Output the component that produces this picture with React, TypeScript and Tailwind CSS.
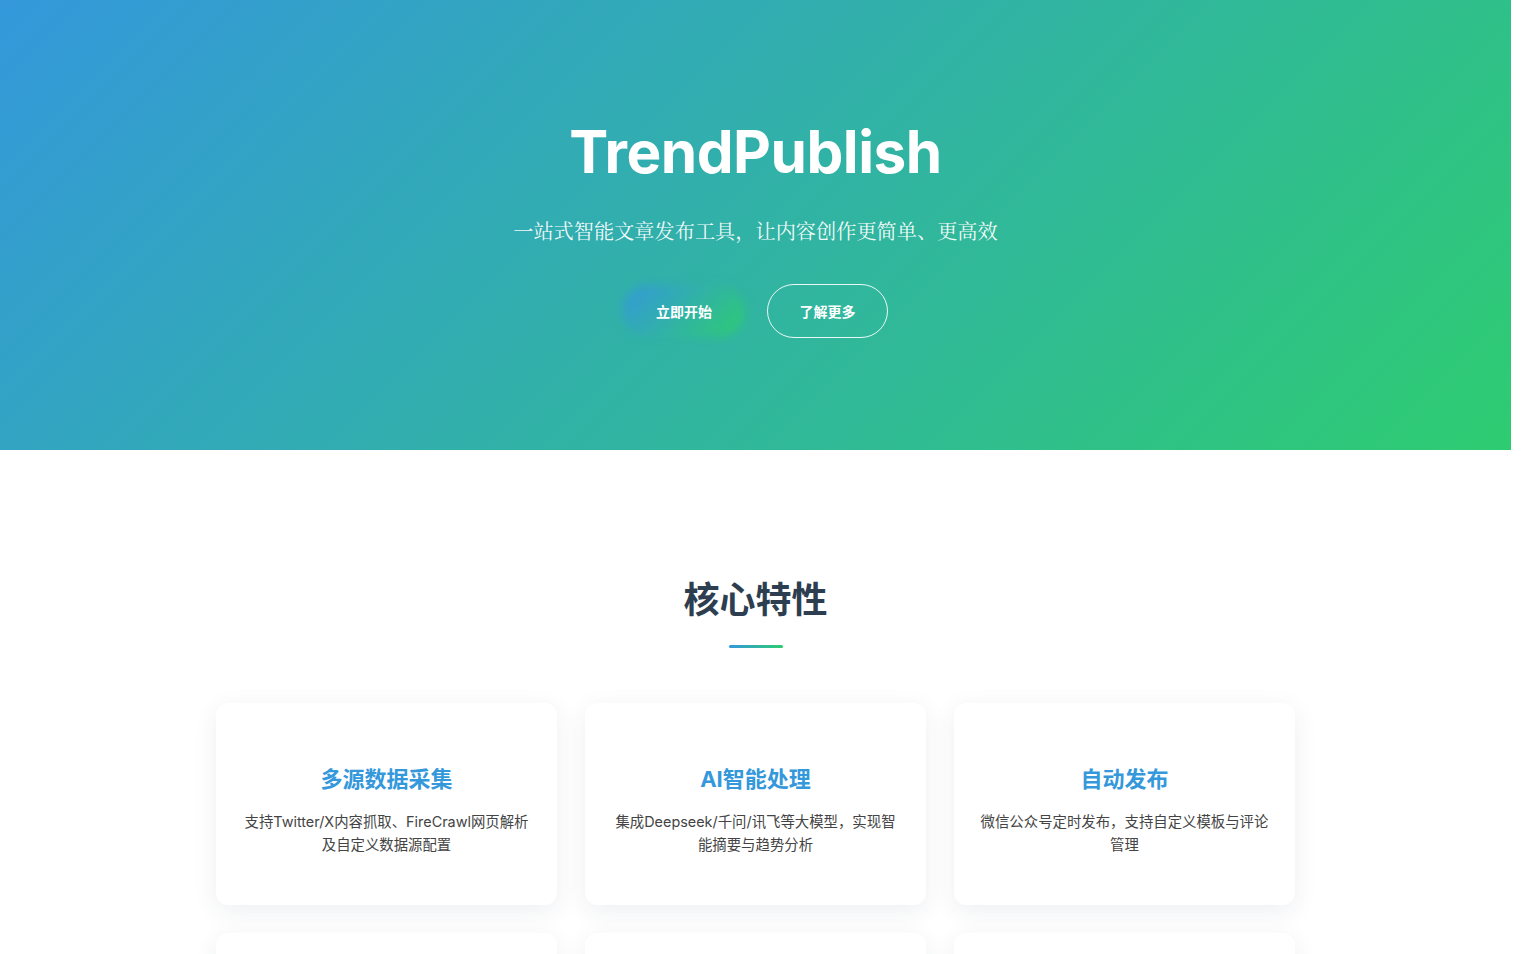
const features = [
  { title: '多源数据采集', desc: '支持Twitter/X内容抓取、FireCrawl网页解析及自定义数据源配置' },
  { title: 'AI智能处理', desc: '集成Deepseek/千问/讯飞等大模型，实现智能摘要与趋势分析' },
  { title: '自动发布', desc: '微信公众号定时发布，支持自定义模板与评论管理' },
  { title: '模板定制', desc: '内置多种文章模板，支持自定义样式与排版' },
  { title: '定时任务', desc: '灵活的任务调度，按计划自动采集与发布' },
  { title: '数据统计', desc: '发布效果追踪，阅读与互动数据一目了然' },
]

const steps = [
  { n: '1', title: '配置数据源', desc: '添加需要追踪的账号与网站' },
  { n: '2', title: '设置AI模型', desc: '选择合适的大模型并配置参数' },
  { n: '3', title: '选择模板', desc: '挑选喜欢的文章排版样式' },
  { n: '4', title: '自动发布', desc: '定时生成并发布到公众号' },
]

const sans = "font-['Inter','Noto_Sans_CJK_SC',sans-serif]"

export default function App() {
  return (
    // right gutter stands in for the browser scrollbar seen in the screenshot
    <div className={`h-screen overflow-y-scroll bg-white pr-[15px] ${sans}`}>
      <section className="h-[450px] bg-[linear-gradient(135deg,#3498db_0%,#2ecc71_100%)] flex flex-col items-center text-white">
        <h1 className="mt-[118px] text-[58.5px] leading-[68px] font-bold tracking-[-0.5px]">TrendPublish</h1>
        <p className="mt-[31px] text-[20.2px] leading-[28px] font-['Noto_Serif_CJK_SC','Liberation_Serif','Noto_Sans_CJK_SC',serif] text-white/95">
          一站式智能文章发布工具，让内容创作更简单、更高效
        </p>
        <div className="mt-[39px] flex items-center gap-[22px]">
          <button className="relative w-[122px] h-[52px] flex items-center justify-center text-[14px] font-bold">
            <span className="absolute inset-0 rounded-full bg-[linear-gradient(135deg,#3498db_0%,#2ecc71_100%)] blur-[5px]" />
            <span className="relative">立即开始</span>
          </button>
          <button className="w-[121px] h-[54px] rounded-full border border-white/90 text-[14px] font-bold">
            了解更多
          </button>
        </div>
      </section>

      <section className="pt-[128px] pb-[100px] flex flex-col items-center">
        <h2 className="text-[36px] leading-[44px] font-bold text-[#2c3e50]">核心特性</h2>
        <div className="mt-[23px] w-[54px] h-[3px] rounded-full bg-[linear-gradient(90deg,#3498db,#2ecc71)]" />
        <div className="mt-[55px] w-[1079px] grid grid-cols-3 gap-[28px]">
          {features.map((f) => (
            <div
              key={f.title}
              className="h-[202px] rounded-[12px] bg-white shadow-[0_6px_24px_rgba(40,50,90,0.08)] px-[25px] pt-[61px] text-center"
            >
              <h3 className="text-[22px] leading-[30px] font-bold text-[#3498db]">{f.title}</h3>
              <p className="mt-[16px] text-[14.4px] leading-[23px] text-[#444]">{f.desc}</p>
            </div>
          ))}
        </div>
      </section>

      <section className="py-[100px] bg-[#f8f9fa] flex flex-col items-center">
        <h2 className="text-[36px] leading-[44px] font-bold text-[#2c3e50]">使用流程</h2>
        <div className="mt-[23px] w-[54px] h-[3px] rounded-full bg-[linear-gradient(90deg,#3498db,#2ecc71)]" />
        <div className="mt-[55px] w-[1079px] grid grid-cols-4 gap-[28px]">
          {steps.map((s) => (
            <div key={s.n} className="flex flex-col items-center text-center">
              <div className="w-[56px] h-[56px] rounded-full bg-[linear-gradient(135deg,#3498db,#2ecc71)] text-white text-[22px] font-bold flex items-center justify-center">
                {s.n}
              </div>
              <h3 className="mt-[18px] text-[18px] font-bold text-[#2c3e50]">{s.title}</h3>
              <p className="mt-[8px] text-[14px] text-[#555]">{s.desc}</p>
            </div>
          ))}
        </div>
      </section>

      <section className="py-[100px] flex flex-col items-center">
        <h2 className="text-[36px] leading-[44px] font-bold text-[#2c3e50]">开始使用</h2>
        <div className="mt-[23px] w-[54px] h-[3px] rounded-full bg-[linear-gradient(90deg,#3498db,#2ecc71)]" />
        <p className="mt-[40px] text-[16px] text-[#555]">克隆仓库，配置环境变量，即可一键部署</p>
        <div className="mt-[30px] w-[700px] rounded-[12px] bg-[#2c3e50] p-[24px] font-['Liberation_Mono',monospace] text-[14px] leading-[24px] text-[#e0e6ea]">
          <div>git clone https://github.com/OpenAISpace/ai-trend-publish</div>
          <div>npm install</div>
          <div>npm run start</div>
        </div>
      </section>

      <footer className="h-[260px] bg-[#2c3e50] flex flex-col items-center justify-center text-white/80 text-[14px]">
        <div className="text-[20px] font-bold text-white">TrendPublish</div>
        <div className="mt-[12px]">© 2025 TrendPublish. All rights reserved.</div>
      </footer>
    </div>
  )
}
